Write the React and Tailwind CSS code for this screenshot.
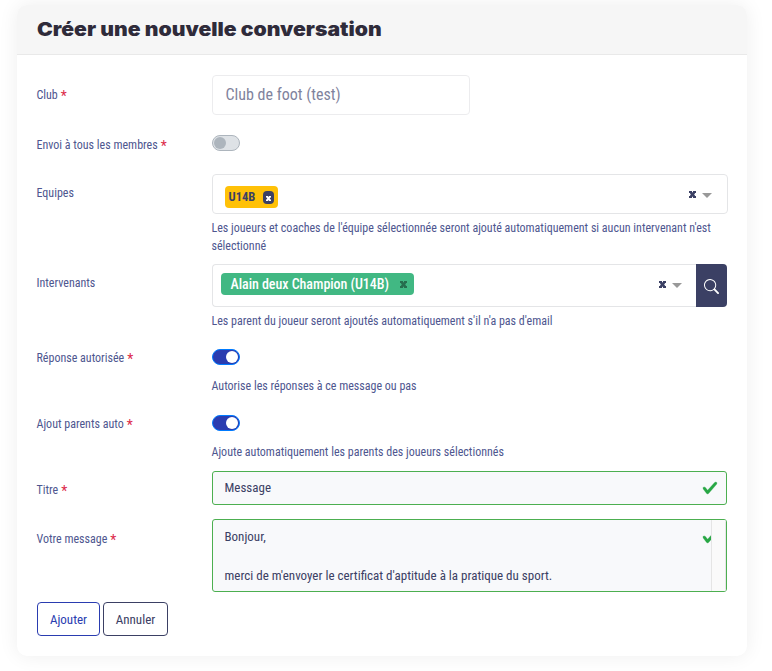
import React from "react";

function Row({ label, required, className, labelClass, children }) {
  return (
    <div className={`flex ${className}`}>
      <div className={`-ml-[0.5px] w-[175.5px] shrink-0 text-[12px] leading-[18px] text-[#4e568f] ${labelClass}`}>
        <span>{label}</span>
        {required && <span className="ml-[3px] inline-block h-3 align-top text-[14px] leading-[20px] text-[#dc2a4a]">*</span>}
      </div>
      <div className="w-[516px] shrink-0">{children}</div>
    </div>
  );
}

function Toggle({ on }) {
  return on ? (
    <div className="flex h-4 w-7 items-center justify-end rounded-full border border-[#007bff] bg-[#2a3cb0] pr-px">
      <div className="size-3 rounded-full bg-white" />
    </div>
  ) : (
    <div className="flex h-4 w-7 items-center rounded-full border border-[#adb5bd] bg-[#dee2e6] pl-px">
      <div className="size-3 rounded-full bg-[#adb5bd]" />
    </div>
  );
}

function Help({ className, children }) {
  return (
    <div className={`-ml-[0.5px] whitespace-nowrap text-[12px] leading-[18px] text-[#4e568f] ${className}`}>
      {children}
    </div>
  );
}

function Cross({ className }) {
  return (
    <svg viewBox="0 0 7 7" className={className} fill="currentColor">
      <path d="M0 0H3V1L3.5 1.5L4 1V0H7V2H6.2L5.2 3.5L6.2 5H7V7H4V6L3.5 5.5L3 6V7H0V5H.8L1.8 3.5L.8 2H0Z" />
    </svg>
  );
}

function SelectControls() {
  return (
    <div className="flex items-center">
      <Cross className="h-[7px] w-[7px] text-[#3b4064]" />
      <svg viewBox="0 0 10 5" className="mt-[2px] ml-[6px] h-[5px] w-[10px] text-[#999]" fill="currentColor">
        <path d="M0 0H10L5 5Z" />
      </svg>
    </div>
  );
}

function Check() {
  return (
    <svg viewBox="0 0 8 8" className="size-4 shrink-0">
      <path
        fill="#28a745"
        stroke="#28a745"
        strokeWidth="0.15"
        d="M2.3 6.73.6 4.53c-.4-1.04.46-1.4 1.1-.8l1.1 1.4 3.4-3.8c.6-.63 1.6-.27 1.2.7l-4 4.6c-.43.5-.8.4-1.1.1z"
      />
    </svg>
  );
}

export default function App() {
  return (
    <div className="h-[671px] w-[772px] overflow-hidden bg-white pt-[5px] pl-[17px] font-['Roboto_Condensed',Roboto,sans-serif] [font-stretch:75%]">
      <div className="h-[651px] w-[730px] overflow-hidden rounded-[10px] bg-white shadow-[0_0_20px_rgba(0,0,0,0.07)]">
        <div className="flex h-[50px] items-center border-b border-[#e9e9e9] bg-[#f6f6f6] pl-5">
          <h1 className="mt-px -ml-[0.5px] origin-left scale-x-[1.112] whitespace-nowrap font-[Inter,sans-serif] text-[19px] font-black text-[#2f2b3a] [font-stretch:100%]">
            Créer une nouvelle conversation
          </h1>
        </div>
        <div className="pt-5 pl-5">
          <Row label="Club" required className="h-[60px]" labelClass="pt-[11px]">
            <div className="flex h-10 w-[258px] items-center rounded-[4px] border border-[#ececee] pl-[12.5px] text-[16px] text-[#7f839d]">
              Club de foot (test)
            </div>
          </Row>
          <Row label="Envoi à tous les membres" required className="h-[39px]" labelClass="pt-px">
            <Toggle />
          </Row>
          <Row label="Equipes" className="h-[90px]" labelClass="pt-[10px]">
            <div className="flex h-10 w-[516px] items-center justify-between rounded-[4px] border border-[#e4e5e7] pr-[15px] pl-3">
              <div className="mt-[5px] flex h-[22px] w-[53px] items-center rounded-[4px] bg-[#ffc107] pl-[3.5px] text-[12.5px] font-bold text-[#3b4064]">
                <span className="w-[34.5px] pt-px">U14B</span>
                <span className="mt-[2px] flex h-[13px] w-[11px] items-center justify-center rounded-[4px] bg-[#3b4064]">
                  <Cross className="mt-[2px] h-[5px] w-[5px] text-white" />
                </span>
              </div>
              <SelectControls />
            </div>
            <Help className="mt-[5px]">
              Les joueurs et coaches de l'équipe sélectionnée seront ajouté automatiquement si aucun intervenant n'est
              <br />
              sélectionné
            </Help>
          </Row>
          <Row label="Intervenants" className="h-[85px]" labelClass="pt-[10px]">
            <div className="flex h-[43px] w-[515px]">
              <div className="flex flex-1 items-start justify-between rounded-l-[4px] border border-r-0 border-[#e4e5e7] pt-2 pr-[14px] pl-2">
                <div className="flex h-[22px] w-[193px] items-center justify-between rounded-[4px] bg-[#41b883] pr-[7px] pl-[9.5px] text-[14px] font-medium tracking-[-0.04px] whitespace-nowrap text-white">
                  <span>Alain deux Champion (U14B)</span>
                  <Cross className="size-[7px] text-[#266d4d]" />
                </div>
                <div className="mt-2">
                  <SelectControls />
                </div>
              </div>
              <div className="flex w-[31px] items-center justify-center rounded-r-[4px] bg-[#3b4064]">
                <svg viewBox="0 0 16 16" className="mt-[2px] mr-px size-[15px] text-white" fill="currentColor">
                  <path d="M11.742 10.344a6.5 6.5 0 1 0-1.397 1.398h-.001q.044.06.098.115l3.85 3.85a1 1 0 0 0 1.415-1.414l-3.85-3.85a1 1 0 0 0-.115-.1zM12 6.5a5.5 5.5 0 1 1-11 0 5.5 5.5 0 0 1 11 0" />
                </svg>
              </div>
            </div>
            <Help className="mt-[5px]">
              Les parent du joueur seront ajoutés automatiquement s'il n'a pas d'email
            </Help>
          </Row>
          <Row label="Réponse autorisée" required className="h-[66px]">
            <Toggle on />
            <Help className="mt-3">Autorise les réponses à ce message ou pas</Help>
          </Row>
          <Row label="Ajout parents auto" required className="h-[56px]">
            <Toggle on />
            <Help className="mt-3">Ajoute automatiquement les parents des joueurs sélectionnés</Help>
          </Row>
          <Row label="Titre" required className="h-12" labelClass="pt-[10px]">
            <div className="flex h-[34px] w-[515px] items-center justify-between rounded-[3px] border border-[#4caf50] bg-[#f8f9fb] pr-[8px] pl-[11.5px] text-[13px] text-[#3b4064]">
              <span>Message</span>
              <Check />
            </div>
          </Row>
          <Row label="Votre message" required className="h-[83px]" labelClass="pt-[11px]">
            <div className="flex h-[73px] w-[515px] overflow-hidden rounded-[3px] border border-[#4caf50] bg-[#f8f9fb] text-[13px] leading-[19.5px] text-[#3b4064]">
              <div className="flex-1 pt-[7px] pl-[11.5px] whitespace-pre-line">
                {"Bonjour,\n\nmerci de m'envoyer le certificat d'aptitude à la pratique du sport."}
              </div>
              <div className="w-[9px] overflow-hidden pt-[9px]">
                <Check />
              </div>
              <div className="w-[15px] border-x border-[#e5e5e5] bg-[#fafafa]" />
            </div>
          </Row>
          <div className="flex gap-[3px] text-[13px]">
            <button className="h-[34px] w-[63px] rounded-[4px] border border-[#2a3cb0] pt-px text-[#2a3cb0]">Ajouter</button>
            <button className="h-[34px] w-[65px] rounded-[4px] border border-[#3b4064] pt-px text-[#3b4064]">Annuler</button>
          </div>
        </div>
      </div>
    </div>
  );
}
